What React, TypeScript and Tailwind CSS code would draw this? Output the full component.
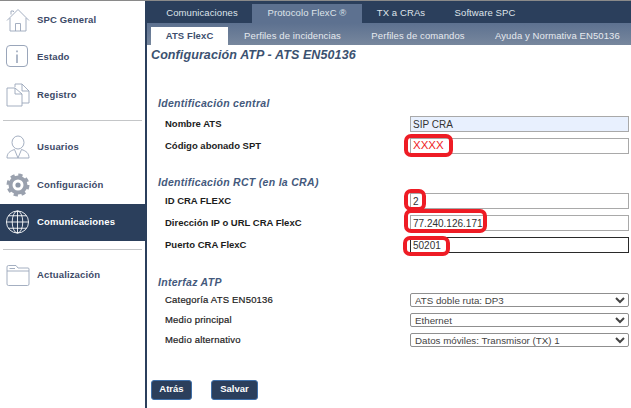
const font = { fontFamily: '"Liberation Sans", Arial, sans-serif' };

const Home = () => (
  <svg width="24" height="24" viewBox="0 0 24 24" fill="none" stroke="#9aa6ba" strokeWidth="0.9">
    <path d="M1 12.5 L12 1.5 L23 12.5 M4 10 V23 H20 V10 M5 6.5 V3 H7.5 V4 M9.5 23 V15.5 H14.5 V23" />
  </svg>
);
const Info = () => (
  <svg width="24" height="24" viewBox="0 0 24 24" fill="none" stroke="#9aa6ba">
    <rect x="0.5" y="0.5" width="21" height="21" rx="3.5" strokeWidth="1" />
    <path d="M11 9.5 V18" strokeWidth="1.6" />
    <path d="M11 5.5 V7.2" strokeWidth="1.6" />
  </svg>
);
const Docs = () => (
  <svg width="24" height="24" viewBox="0 0 24 24" fill="none" stroke="#9aa6ba" strokeWidth="0.9">
    <path d="M9 4 V1 H16 L23 8 V20 H16" />
    <path d="M16 1 V8 H23" />
    <path d="M1 5 H9 L16 11 V23 H1 Z" fill="#fff" />
    <path d="M9 5 V11 H16" />
  </svg>
);
const User = () => (
  <svg width="24" height="24" viewBox="0 0 24 24" fill="none" stroke="#9aa6ba" strokeWidth="0.9">
    <ellipse cx="12" cy="7.5" rx="6" ry="6.5" />
    <path d="M1 23 C1 18 4 16 8.5 14.5 L12 23 L15.5 14.5 C20 16 23 18 23 23 Z" />
  </svg>
);
const Gear = () => (
  <svg width="24" height="24" viewBox="0 0 24 24">
    <circle cx="12" cy="12" r="7.5" fill="none" stroke="#9aa1ae" strokeWidth="4" />
    <circle cx="12" cy="12" r="9.5" fill="none" stroke="#9aa1ae" strokeWidth="4" strokeDasharray="4 3.46" />
    <circle cx="12" cy="12" r="2.6" fill="#8c96a6" />
  </svg>
);
const Globe = () => (
  <svg width="26" height="26" viewBox="0 0 26 26" fill="none" stroke="#fff" strokeWidth="0.9">
    <circle cx="13" cy="13" r="11.5" />
    <ellipse cx="13" cy="13" rx="5.5" ry="11.5" />
    <path d="M13 1.5 V24.5 M1.5 13 H24.5 M3.5 6.5 H22.5 M3.5 19.5 H22.5" />
  </svg>
);
const Folder = () => (
  <svg width="24" height="24" viewBox="0 0 24 24" fill="none" stroke="#9aa6ba" strokeWidth="0.9">
    <path d="M1 8 V4 Q1 2.5 2.5 2.5 H10 L12 5 H22 Q23 5 23 6 V8" />
    <path d="M1 8 H23 V21 Q23 22.5 21.5 22.5 H2.5 Q1 22.5 1 21 Z" />
    <path d="M3.5 5.5 H9" />
  </svg>
);

function NavItem({ icon, label, active }: { icon: React.ReactNode; label: string; active?: boolean }) {
  return (
    <div className={`flex h-[37.5px] items-center pl-[5px] ${active ? "bg-[#2b3f5c] text-white" : "text-[#3d4a68]"}`}>
      <div className="flex w-[25px] justify-center">{icon}</div>
      <span className="ml-[7px] text-[9.5px] font-bold tracking-[0.15px]">{label}</span>
    </div>
  );
}

const Divider = () => <div className="mx-[3px] h-px bg-[#c4c6c8]" />;

function Row({ label, children }: { label: string; children: React.ReactNode }) {
  return (
    <div className="flex h-[22px] items-center pl-[14px]">
      <span className="text-[9.5px] font-bold text-[#1c1c1c]">{label}</span>
      <div className="relative ml-auto w-[219px]">{children}</div>
    </div>
  );
}

function SelectRow({ label, value }: { label: string; value: string }) {
  return (
    <div className="flex h-[20.2px] items-center pl-[14px]">
      <span className="text-[9.5px] tracking-[0.2px] text-[#1c1c1c] [-webkit-text-stroke:0.2px_#1c1c1c]">{label}</span>
      <select
        defaultValue={value}
        className="ml-auto h-[14px] w-[219px] appearance-auto rounded-[2px] border border-[#8f8f8f] bg-white text-[9.75px] leading-none text-[#444]"
      >
        <option>{value}</option>
      </select>
    </div>
  );
}

function Field({ value, bg, strong, red }: { value: string; bg?: string; strong?: boolean; red?: boolean }) {
  return (
    <input
      readOnly
      value={value}
      className={`block h-[16px] w-full border px-[2px] outline-none ${bg ?? "bg-white"} ${strong ? "border-[1.5px] border-[#2a2a2a]" : "border-[#a9a9a9]"} ${red ? "text-[11.5px] text-[#ee1c25]" : "text-[10px] text-[#333]"}`}
    />
  );
}

const Ring = ({ className }: { className: string }) => (
  <div className={`pointer-events-none absolute rounded-[7px] border-[4px] border-[#ee1c25] ${className}`} />
);

const Heading = ({ children, className }: { children: string; className: string }) => (
  <h3 className={`pl-[7px] text-[10.5px] font-bold italic tracking-[0.3px] text-[#44597c] ${className}`}>{children}</h3>
);

export default function App() {
  return (
    <div className="flex h-[408px] w-[631px] overflow-hidden border-t border-[#8a8a8a] bg-white" style={font}>
      <aside className="w-[147px] shrink-0 border-r-[2px] border-[#2b3f5c]">
        <NavItem icon={<Home />} label="SPC General" />
        <NavItem icon={<Info />} label="Estado" />
        <NavItem icon={<Docs />} label="Registro" />
        <div className="mt-[6px]">
          <Divider />
        </div>
        <div className="mt-[8px]">
          <NavItem icon={<User />} label="Usuarios" />
          <NavItem icon={<Gear />} label="Configuración" />
          <NavItem icon={<Globe />} label="Comunicaciones" active />
        </div>
        <div className="mt-[8px]">
          <Divider />
        </div>
        <div className="mt-[6px]">
          <NavItem icon={<Folder />} label="Actualización" />
        </div>
      </aside>

      <main className="min-w-0 flex-1">
        <div className="flex h-[22px] items-end bg-[#2b3f5c] pl-[5px] text-[9.5px] tracking-[0.1px] text-[#dfe4ea]">
          <div className="flex h-[19px] w-[100px] items-center justify-center">Comunicaciones</div>
          <div className="flex h-[19px] w-[110px] items-center justify-center bg-[#5d7190]">Protocolo FlexC ®</div>
          <div className="flex h-[19px] w-[78px] items-center justify-center">TX a CRAs</div>
          <div className="flex h-[19px] w-[90px] items-center justify-center">Software SPC</div>
        </div>
        <div className="flex h-[22px] items-end bg-gradient-to-b from-[#5d7190] to-[#77879d] pl-[4px] text-[9.5px] tracking-[0.1px] text-[#e6eaef]">
          <div className="flex h-[18px] w-[77px] items-center justify-center bg-white font-bold text-[#3d4f6e]">ATS FlexC</div>
          <div className="flex h-[18px] w-[129px] items-center justify-center">Perfiles de incidencias</div>
          <div className="flex h-[18px] w-[122px] items-center justify-center">Perfiles de comandos</div>
          <div className="flex h-[18px] items-center pl-[16px]">Ayuda y Normativa EN50136</div>
        </div>

        <div className="pr-[2px] pl-[4px]">
          <h2 className="mt-[2px] text-[12.5px] leading-[17px] font-bold italic tracking-[0.1px] text-[#3b5170]">
            Configuración ATP - ATS EN50136
          </h2>

          <Heading className="mt-[32px] leading-[14px]">Identificación central</Heading>
          <div className="mt-[3px]">
            <Row label="Nombre ATS">
              <Field value="SIP CRA" bg="bg-[#e8f0fe]" />
            </Row>
            <Row label="Código abonado SPT">
              <Field value="XXXX" red />
              <Ring className="top-[-4px] left-[-6px] h-[23px] w-[49px]" />
            </Row>
          </div>

          <Heading className="mt-[18px] leading-[14px]">Identificación RCT (en la CRA)</Heading>
          <div className="mt-[1px]">
            <Row label="ID CRA FLEXC">
              <Field value="2" />
              <Ring className="top-[-4px] left-[-6px] h-[22px] w-[22px]" />
            </Row>
            <Row label="Dirección IP o URL CRA FlexC">
              <Field value="77.240.126.171" />
              <Ring className="top-[-6px] left-[-6px] h-[24px] w-[83px]" />
            </Row>
            <Row label="Puerto CRA FlexC">
              <Field value="50201" strong />
              <Ring className="top-[-1px] left-[-7px] h-[20px] w-[47px]" />
            </Row>
          </div>

          <Heading className="mt-[19px] leading-[14px]">Interfaz ATP</Heading>
          <div className="mt-[1px]">
            <SelectRow label="Categoría ATS EN50136" value="ATS doble ruta: DP3" />
            <SelectRow label="Medio principal" value="Ethernet" />
            <SelectRow label="Medio alternativo" value="Datos móviles: Transmisor (TX) 1" />
          </div>

          <div className="mt-[29px] flex gap-[19px]">
            <button className="h-[20px] w-[41px] rounded-[3px] border border-[#3f6fa8] bg-[#2b3f5c] text-[9.5px] font-bold text-white">Atrás</button>
            <button className="h-[20px] w-[47px] rounded-[3px] border border-[#3f6fa8] bg-[#2b3f5c] text-[9.5px] font-bold text-white">Salvar</button>
          </div>
        </div>
      </main>
    </div>
  );
}
